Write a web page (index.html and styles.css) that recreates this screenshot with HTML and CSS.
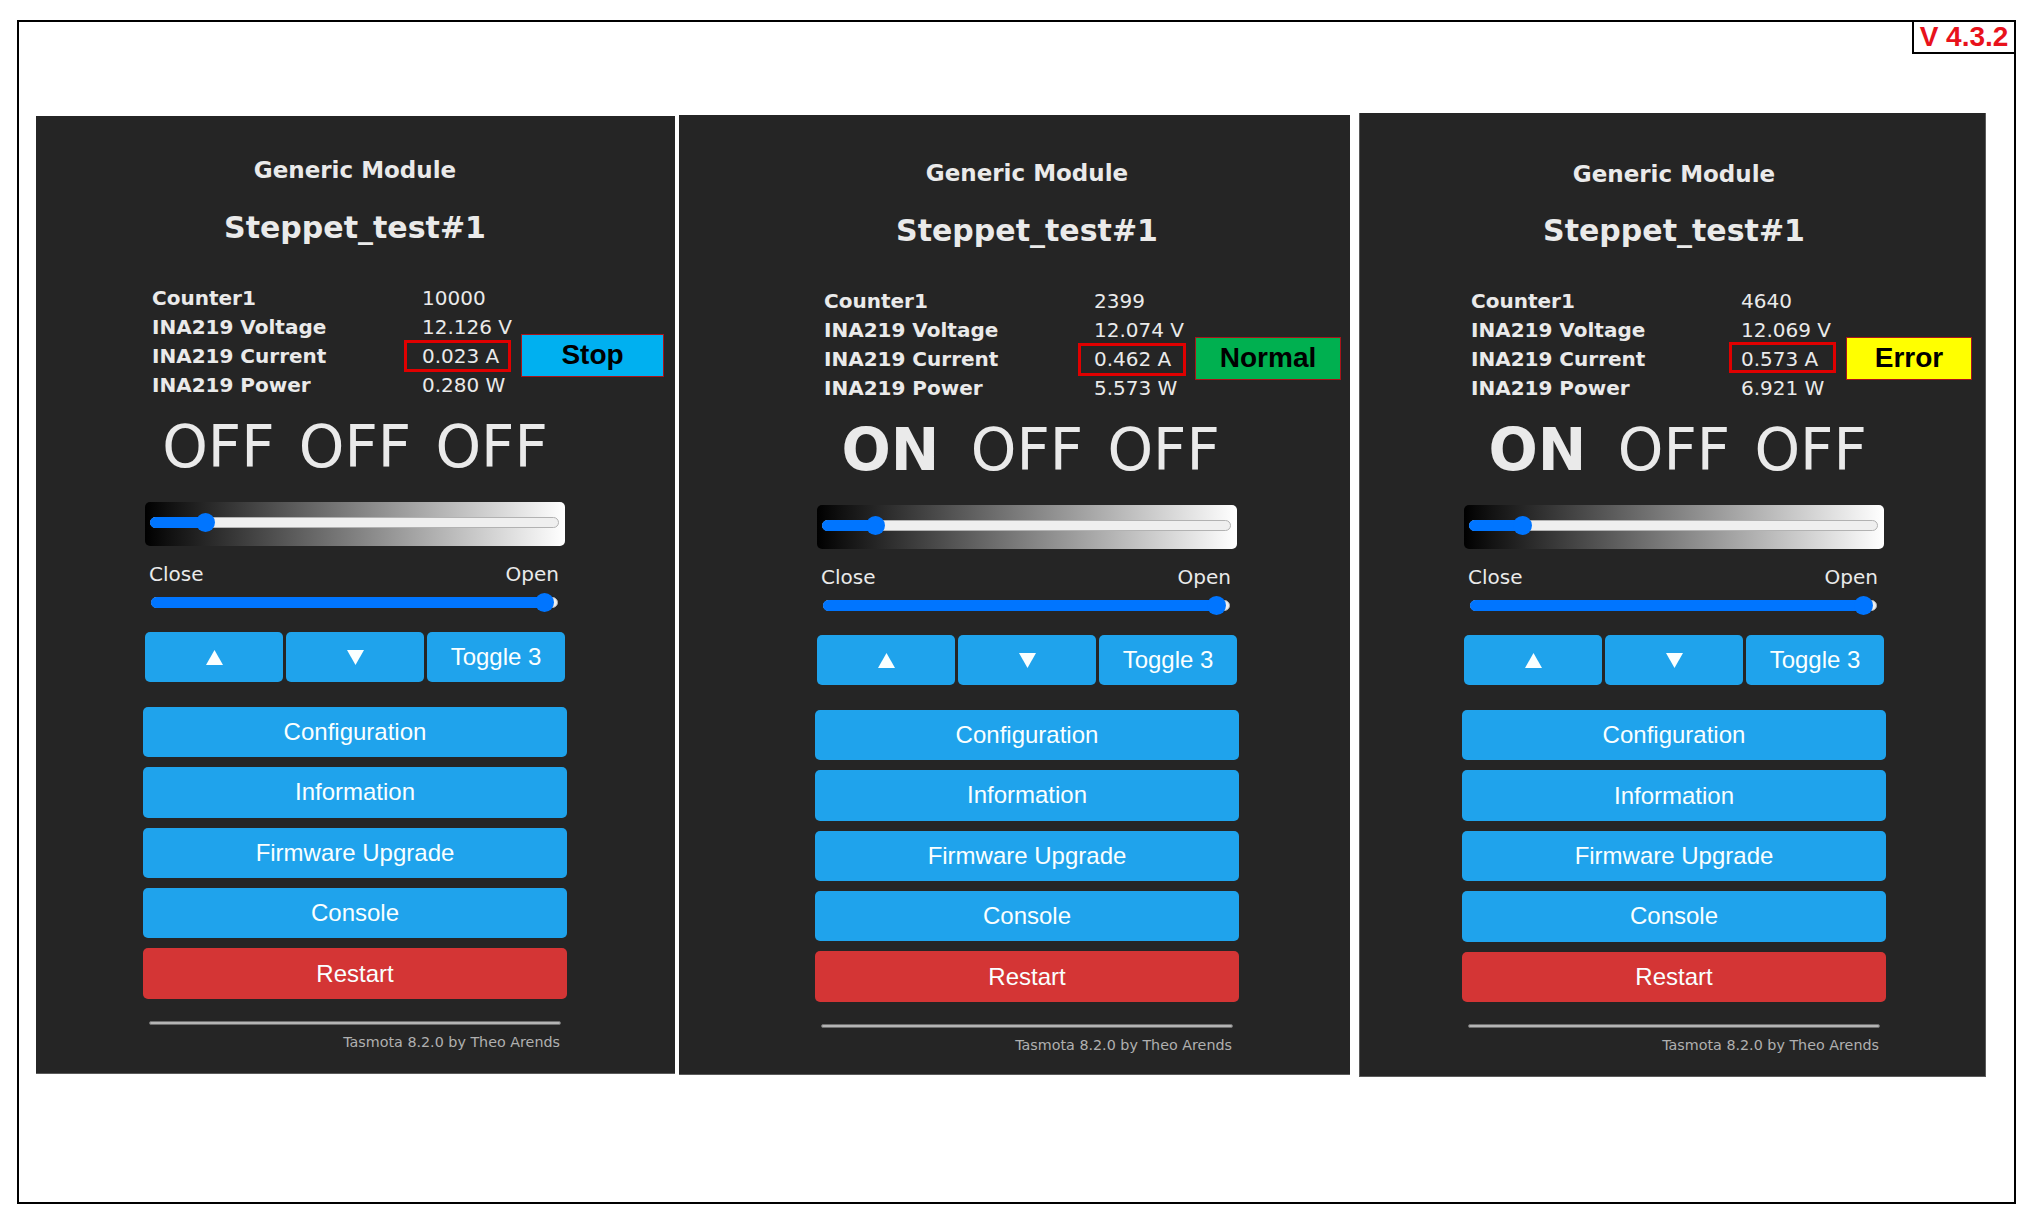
FILE: index.html
```html
<!DOCTYPE html>
<html>
<head>
<meta charset="utf-8">
<title>Tasmota Steppet_test#1</title>
<link rel="stylesheet" href="styles.css">
</head>
<body>
<div class="frame">
  <div class="version">V 4.3.2</div>
  <div class="panels">

    <section class="panel panel-1">
      <div class="content">
        <h3 class="module">Generic Module</h3>
        <h2 class="device">Steppet_test#1</h2>
        <div class="sensors">
          <div class="label">Counter1</div><div class="value">10000</div>
          <div class="label">INA219 Voltage</div><div class="value">12.126 V</div>
          <div class="label">INA219 Current</div><div class="value">0.023 A<span class="mark"></span><span class="status status-stop">Stop</span></div>
          <div class="label">INA219 Power</div><div class="value">0.280 W</div>
        </div>
        <div class="states"><span>OFF</span><span>OFF</span><span>OFF</span></div>
        <div class="dimmer"><div class="track"><div class="fill" style="width:54px"></div><div class="thumb" style="left:54px"></div></div></div>
        <div class="range-labels"><span>Close</span><span>Open</span></div>
        <div class="shutter"><div class="track"><div class="fill" style="width:392px"></div><div class="thumb" style="left:392px"></div></div></div>
        <div class="btn-row">
          <button class="btn"><svg class="tri" viewBox="0 0 17 15" width="17" height="15"><polygon points="8.5,0 17,15 0,15"/></svg></button>
          <button class="btn"><svg class="tri" viewBox="0 0 17 15" width="17" height="15"><polygon points="0,0 17,0 8.5,15"/></svg></button>
          <button class="btn">Toggle 3</button>
        </div>
        <div class="menu">
          <button class="btn wide">Configuration</button>
          <button class="btn wide">Information</button>
          <button class="btn wide">Firmware Upgrade</button>
          <button class="btn wide">Console</button>
          <button class="btn wide danger">Restart</button>
        </div>
        <div class="sep"></div>
        <div class="footer">Tasmota 8.2.0 by Theo Arends</div>
      </div>
    </section>

    <section class="panel panel-2">
      <div class="content">
        <h3 class="module">Generic Module</h3>
        <h2 class="device">Steppet_test#1</h2>
        <div class="sensors">
          <div class="label">Counter1</div><div class="value">2399</div>
          <div class="label">INA219 Voltage</div><div class="value">12.074 V</div>
          <div class="label">INA219 Current</div><div class="value">0.462 A<span class="mark"></span><span class="status status-normal">Normal</span></div>
          <div class="label">INA219 Power</div><div class="value">5.573 W</div>
        </div>
        <div class="states"><span class="on">ON</span><span>OFF</span><span>OFF</span></div>
        <div class="dimmer"><div class="track"><div class="fill" style="width:52px"></div><div class="thumb" style="left:52px"></div></div></div>
        <div class="range-labels"><span>Close</span><span>Open</span></div>
        <div class="shutter"><div class="track"><div class="fill" style="width:392px"></div><div class="thumb" style="left:392px"></div></div></div>
        <div class="btn-row">
          <button class="btn"><svg class="tri" viewBox="0 0 17 15" width="17" height="15"><polygon points="8.5,0 17,15 0,15"/></svg></button>
          <button class="btn"><svg class="tri" viewBox="0 0 17 15" width="17" height="15"><polygon points="0,0 17,0 8.5,15"/></svg></button>
          <button class="btn">Toggle 3</button>
        </div>
        <div class="menu">
          <button class="btn wide">Configuration</button>
          <button class="btn wide">Information</button>
          <button class="btn wide">Firmware Upgrade</button>
          <button class="btn wide">Console</button>
          <button class="btn wide danger">Restart</button>
        </div>
        <div class="sep"></div>
        <div class="footer">Tasmota 8.2.0 by Theo Arends</div>
      </div>
    </section>

    <section class="panel panel-3">
      <div class="content">
        <h3 class="module">Generic Module</h3>
        <h2 class="device">Steppet_test#1</h2>
        <div class="sensors">
          <div class="label">Counter1</div><div class="value">4640</div>
          <div class="label">INA219 Voltage</div><div class="value">12.069 V</div>
          <div class="label">INA219 Current</div><div class="value">0.573 A<span class="mark"></span><span class="status status-error">Error</span></div>
          <div class="label">INA219 Power</div><div class="value">6.921 W</div>
        </div>
        <div class="states"><span class="on">ON</span><span>OFF</span><span>OFF</span></div>
        <div class="dimmer"><div class="track"><div class="fill" style="width:52px"></div><div class="thumb" style="left:52px"></div></div></div>
        <div class="range-labels"><span>Close</span><span>Open</span></div>
        <div class="shutter"><div class="track"><div class="fill" style="width:392px"></div><div class="thumb" style="left:392px"></div></div></div>
        <div class="btn-row">
          <button class="btn"><svg class="tri" viewBox="0 0 17 15" width="17" height="15"><polygon points="8.5,0 17,15 0,15"/></svg></button>
          <button class="btn"><svg class="tri" viewBox="0 0 17 15" width="17" height="15"><polygon points="0,0 17,0 8.5,15"/></svg></button>
          <button class="btn">Toggle 3</button>
        </div>
        <div class="menu">
          <button class="btn wide">Configuration</button>
          <button class="btn wide">Information</button>
          <button class="btn wide">Firmware Upgrade</button>
          <button class="btn wide">Console</button>
          <button class="btn wide danger">Restart</button>
        </div>
        <div class="sep"></div>
        <div class="footer">Tasmota 8.2.0 by Theo Arends</div>
      </div>
    </section>

  </div>
</div>
</body>
</html>
```

FILE: styles.css
```css
html, body {
  margin: 0;
  padding: 0;
  background: #ffffff;
}

.frame {
  position: relative;
  box-sizing: border-box;
  width: 1999px;
  height: 1184px;
  margin: 20px 0 0 17px;
  border: 2px solid #000;
}

.version {
  position: absolute;
  top: -2px;
  right: -2px;
  box-sizing: border-box;
  width: 104px;
  height: 34px;
  border: 2px solid #000;
  display: flex;
  align-items: center;
  justify-content: center;
  font-family: "Liberation Sans", Arial, sans-serif;
  font-weight: bold;
  font-size: 28px;
  color: #e8121b;
  background: #fff;
}

.panels {
  display: flex;
  align-items: flex-start;
  padding-left: 17px;
}

.panel {
  box-sizing: border-box;
  background: #252525;
  color: #eaeaea;
  font-family: "DejaVu Sans", Verdana, sans-serif;
  flex: none;
}

.panel-1 {
  width: 639px;
  height: 958px;
  margin-top: 94px;
  padding-top: 40.4px;
  border-bottom: 1px solid #5a5a5a;
}
.panel-1 .content { margin-left: 107px; }

.panel-2 {
  width: 671px;
  height: 960px;
  margin-top: 93px;
  margin-left: 4px;
  padding-top: 44.4px;
  border-bottom: 1px solid #5a5a5a;
}
.panel-2 .content { margin-left: 136px; }

.panel-3 {
  width: 627px;
  height: 964px;
  margin-top: 91px;
  margin-left: 9px;
  padding-top: 46.6px;
  border: 1px solid #5a5a5a;
  border-top: 0;
}
.panel-3 .content { margin-left: 102px; }

.content {
  width: 424px;
}

.module {
  margin: 0;
  font-size: 23px;
  line-height: 28px;
  font-weight: bold;
  text-align: center;
}

.device {
  margin: 25.7px 0 0;
  font-size: 30px;
  line-height: 36px;
  font-weight: bold;
  text-align: center;
}

.sensors {
  margin-top: 38px;
  padding-left: 9px;
  display: grid;
  grid-template-columns: 270px 1fr;
  font-size: 20px;
  line-height: 29px;
}

.label {
  font-weight: bold;
  white-space: nowrap;
}

.value {
  position: relative;
  white-space: nowrap;
}

.mark {
  position: absolute;
  top: -2px;
  height: 32px;
  box-sizing: border-box;
  border: 3px solid #e00000;
}

.status {
  position: absolute;
  top: -8px;
  height: 43px;
  box-sizing: border-box;
  border: 1px solid #a8141a;
  display: flex;
  align-items: center;
  justify-content: center;
  padding-bottom: 2px;
  font-family: "Liberation Sans", Arial, sans-serif;
  font-weight: bold;
  font-size: 28px;
  color: #000;
}

.panel-1 .mark { left: -18px; width: 107px; }
.panel-2 .mark { left: -16px; width: 108px; top: -2.5px; height: 33.5px; }
.panel-3 .mark { left: -12px; width: 107px; top: -3px; height: 31px; }

.status-stop {
  left: 99px;
  width: 143px;
  background: #00b0f0;
}
.status-normal {
  left: 101px;
  width: 146px;
  background: #00b050;
}
.status-error {
  left: 105px;
  width: 126px;
  background: #ffff00;
  top: -8.5px;
}

.states {
  margin: 12px 7px 0;
  display: grid;
  grid-template-columns: 1fr 1fr 1fr;
  font-size: 58px;
  line-height: 70px;
  height: 70px;
  text-align: center;
}

.states .on {
  font-weight: bold;
}

.dimmer {
  margin: 20px 2px 0;
  height: 44px;
  box-sizing: border-box;
  padding: 15px 6px 0 5px;
  border-radius: 5px;
  background: linear-gradient(to right, #000 0%, #111 6%, #fff 100%);
}

.track {
  position: relative;
  height: 11px;
  box-sizing: border-box;
  background: #efefef;
  border: 1px solid #b2b2b2;
  border-radius: 6px;
}

.fill {
  position: absolute;
  left: -1px;
  top: -1px;
  bottom: -1px;
  background: #0075ff;
  border-radius: 6px 0 0 6px;
}

.thumb {
  position: absolute;
  top: 50%;
  width: 19px;
  height: 19px;
  margin: -9.5px 0 0 -9.5px;
  border-radius: 50%;
  background: #0075ff;
}

.range-labels {
  margin-top: 16px;
  padding: 0 8px 0 6px;
  display: flex;
  justify-content: space-between;
  font-size: 20px;
  line-height: 24px;
}

.shutter {
  margin: 6px 9px 0 8px;
  height: 22px;
  box-sizing: border-box;
  padding-top: 5px;
}

.btn {
  display: flex;
  align-items: center;
  justify-content: center;
  box-sizing: border-box;
  border: 0;
  padding: 0;
  margin: 0;
  border-radius: 5px;
  background: #1fa3ec;
  color: #faffff;
  font-family: "Liberation Sans", Arial, sans-serif;
  font-size: 24px;
  line-height: 50px;
  height: 50px;
}

.tri {
  display: block;
  fill: #faffff;
}

.btn-row {
  margin: 18px 2px 0;
  display: grid;
  grid-template-columns: 1fr 1fr 1fr;
  column-gap: 3px;
}

.menu {
  margin-top: 24.7px;
  display: flex;
  flex-direction: column;
  gap: 10px;
}

.wide {
  width: 100%;
  height: 50.4px;
}

.danger {
  background: #d43535;
}

.sep {
  margin: 22.5px 6px 0 6px;
  height: 4px;
  box-sizing: border-box;
  border-radius: 2px;
  background: #b4b4b4;
  border: 1px solid #6e6e6e;
}

.footer {
  margin-top: 8px;
  padding-right: 7px;
  text-align: right;
  font-size: 14.3px;
  line-height: 18px;
  color: #b0b0b0;
}
```
